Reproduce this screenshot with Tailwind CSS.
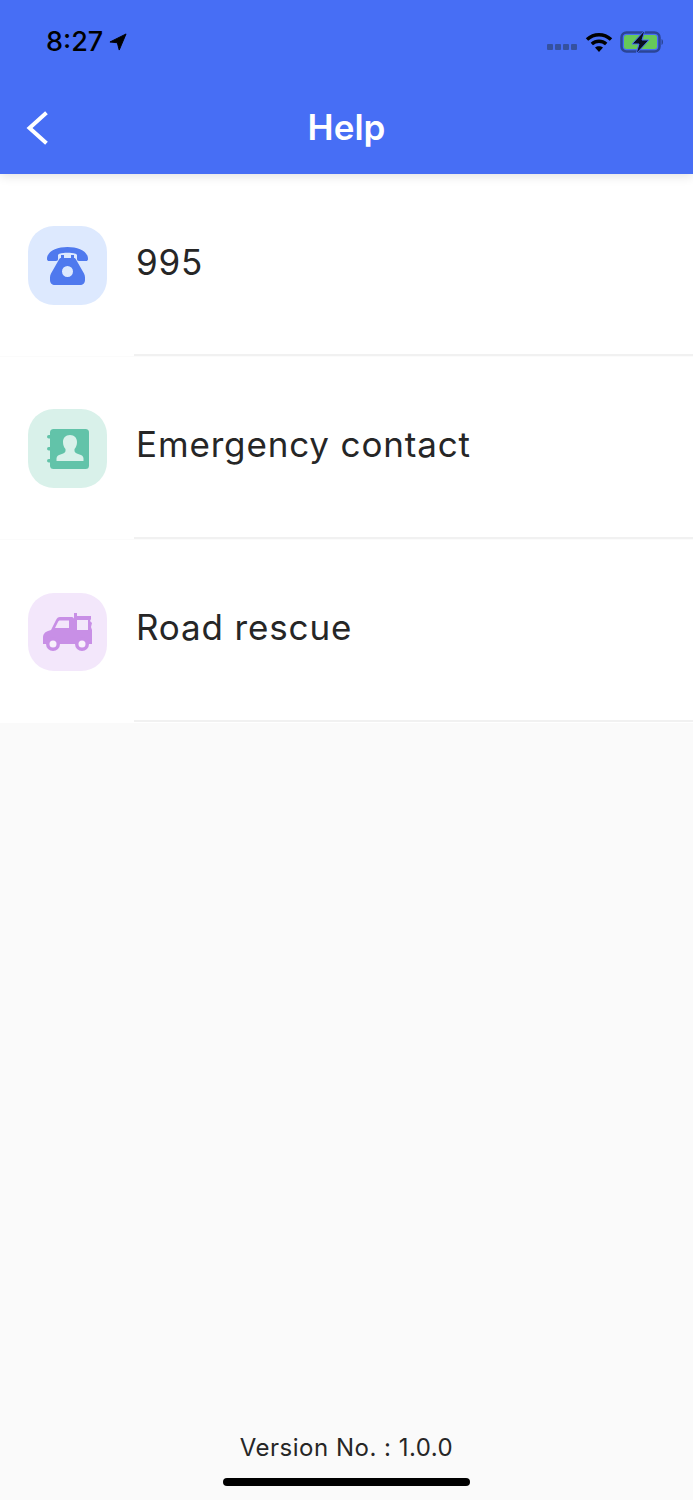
<!DOCTYPE html>
<html lang="en">

<head>
    <meta charset="UTF-8">
    <meta name="viewport" content="width=device-width, initial-scale=1.0">
    <title>Help</title>
    <script src="https://cdn.jsdelivr.net/npm/@tailwindcss/browser@4"></script>
</head>

<body class="bg-[#fafafa] font-['Inter',sans-serif]">
    <div class="flex flex-col h-[1500px] w-[693px] overflow-hidden">
        <!-- header -->
        <header class="relative z-10 h-[174px] shrink-0 bg-[#476ef5] shadow-[0_2px_10px_rgba(0,0,0,0.12)]">
            <div class="flex h-[80px] items-center justify-between pl-[46px] pr-[28px] pt-[3px]">
                <div class="flex items-center gap-[6px]">
                    <span class="text-[27px] font-medium leading-none text-black">8:27</span>
                    <svg class="w-[18px] h-[18px]" viewBox="0 0 19 19"><path d="M18 1 1 9.500l7.800.8L10.800 18z" fill="#000" stroke="#000" stroke-linejoin="round"/></svg>
                </div>
                <div class="flex items-center">
                    <div class="flex gap-[2px] mr-[8px] mt-[10px]">
                        <span class="w-[6px] h-[6px] rounded-[1px] bg-[#35519f]"></span>
                        <span class="w-[6px] h-[6px] rounded-[1px] bg-[#35519f]"></span>
                        <span class="w-[6px] h-[6px] rounded-[1px] bg-[#35519f]"></span>
                        <span class="w-[6px] h-[6px] rounded-[1px] bg-[#35519f]"></span>
                    </div>
                    <svg class="w-[28px] h-[22px] mr-[7px]" viewBox="0 0 28 22" fill="none" stroke="#000" stroke-width="3.500">
                        <path d="M2 8.500c7-6.500 17-6.500 24 0"/>
                        <path d="M6.800 13c4.300-3.800 10.100-3.800 14.400 0"/>
                        <path d="M14 21l-4-4.500c2.300-1.800 5.700-1.800 8 0z" fill="#000" stroke="none"/>
                    </svg>
                    <svg class="w-[45px] h-[24px]" viewBox="0 0 45 24">
                        <rect x="1.500" y="2.500" width="38" height="19" rx="5" fill="none" stroke="#2b4596" stroke-width="2.500"/>
                        <rect x="4" y="5" width="33" height="14" rx="2.500" fill="#66c85a"/>
                        <path d="M41.500 9c2 .5 2 5.500 0 6z" fill="#2b4596"/>
                        <path d="M25 0 12 14h7l-3 10 13-14h-7z" fill="#0a1020" stroke="#476ef5" stroke-width="1"/>
                    </svg>
                </div>
            </div>
            <div class="relative flex h-[94px] items-center justify-center">
                <svg class="absolute left-[26px] top-[31px] w-[22px] h-[34px]" viewBox="0 0 22 34" fill="none" stroke="#fff" stroke-width="4" stroke-linecap="square">
                    <path d="M19 3 3.500 17 19 31"/>
                </svg>
                <h1 class="text-[35px] font-semibold leading-none text-white">Help</h1>
            </div>
        </header>

        <!-- rows -->
        <ul class="bg-white">
            <li class="flex h-[183px] pl-[28px] border-b border-[#fbfbfb]">
                <div class="mt-[52px] flex h-[79px] w-[79px] shrink-0 items-center justify-center rounded-[26px] bg-[#dde9fe]">
                    <svg class="w-[41px] h-[39px]" viewBox="0 0 41 39">
                        <path d="M0 13C0 5 10 1 20.500 1S41 5 41 13c0 1.500-1 2-2 2h-7c-1.500 0-2-1-2-2V9.500c0-1-.5-1.500-1.500-1.800-2.500-.7-5-1-8-1s-5.500.3-8 1C11.500 8 11 8.500 11 9.500V13c0 1-.5 2-2 2H2c-1 0-2-.5-2-2z" fill="#4f79ee"/>
                        <path fill-rule="evenodd" d="M14 9h3v3h7V9h3v3c1 0 1.500.5 2 1.500l8 14c.7 1.200 1 2.500 1 4V34c0 3-2 5-5 5H8c-3 0-5-2-5-5v-2.500c0-1.500.3-2.800 1-4l8-14c.5-1 1-1.500 2-1.500zm6.500 11a5.500 5.500 0 1 0 0 11 5.500 5.500 0 0 0 0-11z" fill="#4f79ee"/>
                    </svg>
                </div>
                <div class="ml-[27px] h-[182px] flex-1 border-b-2 border-[#f1f1f1] pl-[2px] pt-[65px] text-[35px] leading-[46px] tracking-[0.85px] text-[#262626]">995</div>
            </li>
            <li class="flex h-[183px] pl-[28px] border-b border-[#fbfbfb]">
                <div class="mt-[52px] flex h-[79px] w-[79px] shrink-0 items-center justify-center rounded-[26px] bg-[#d9f1ea]">
                    <svg class="w-[42px] h-[40px]" viewBox="0 0 42 40">
                        <rect x="3" y="0" width="39" height="40" rx="3.500" fill="#62c3a9"/>
                        <rect x="0" y="6" width="6" height="3.500" rx="1.750" fill="#62c3a9"/>
                        <rect x="0" y="18" width="6" height="3.500" rx="1.750" fill="#62c3a9"/>
                        <rect x="0" y="30" width="6" height="3.500" rx="1.750" fill="#62c3a9"/>
                        <path d="M23 6c-4.500 0-7 3-7 7 0 3 1 5.500 2.500 7v2c0 1.500-2 2.500-5 3.500-2 .7-4 1.500-4 4V32h27v-2.500c0-2.500-2-3.300-4-4-3-1-5-2-5-3.500v-2c1.500-1.500 2.500-4 2.500-7 0-4-2.500-7-7-7z" fill="#d9f1ea"/>
                    </svg>
                </div>
                <div class="ml-[27px] h-[182px] flex-1 border-b-2 border-[#f1f1f1] pl-[2px] pt-[64px] text-[35px] leading-[46px] tracking-[0.85px] text-[#262626]">Emergency contact</div>
            </li>
            <li class="flex h-[183px] pl-[28px]">
                <div class="mt-[53px] flex h-[78px] w-[79px] shrink-0 items-center justify-center rounded-[26px] bg-[#f3e7fb]">
                    <svg class="w-[49px] h-[38px]" viewBox="0 0 49 38">
                        <path d="M0 25c0-4 2-6 5-7l3-1 5-10c1-2 2-3 4-3h12c1 0 2 1 2 2V0h3v3h14v3l-1 2 2 2-1 4 1 3v14H0z" fill="#c88fe6"/>
                        <path d="M12 15l3-6c.5-1 1-1.500 2-1.500h9V15z" fill="#f3e7fb"/>
                        <rect x="34" y="7" width="11" height="10" fill="#f3e7fb"/>
                        <circle cx="10" cy="31" r="7" fill="#c88fe6"/>
                        <circle cx="10" cy="31" r="3.500" fill="#f8f1fc"/>
                        <circle cx="39" cy="31" r="7" fill="#c88fe6"/>
                        <circle cx="39" cy="31" r="3.500" fill="#f8f1fc"/>
                    </svg>
                </div>
                <div class="ml-[27px] h-[182px] flex-1 border-b-2 border-[#f1f1f1] pl-[2px] pt-[64px] text-[35px] leading-[46px] tracking-[0.85px] text-[#262626]">Road rescue</div>
            </li>
        </ul>

        <!-- footer -->
        <footer class="mt-auto flex flex-col items-center pb-[14px]">
            <p class="text-[24px] leading-[30px] tracking-[0.5px] text-[#262626]">Version No. : 1.0.0</p>
            <div class="mt-[15px] h-[8px] w-[247px] rounded-full bg-black"></div>
        </footer>
    </div>
</body>

</html>
